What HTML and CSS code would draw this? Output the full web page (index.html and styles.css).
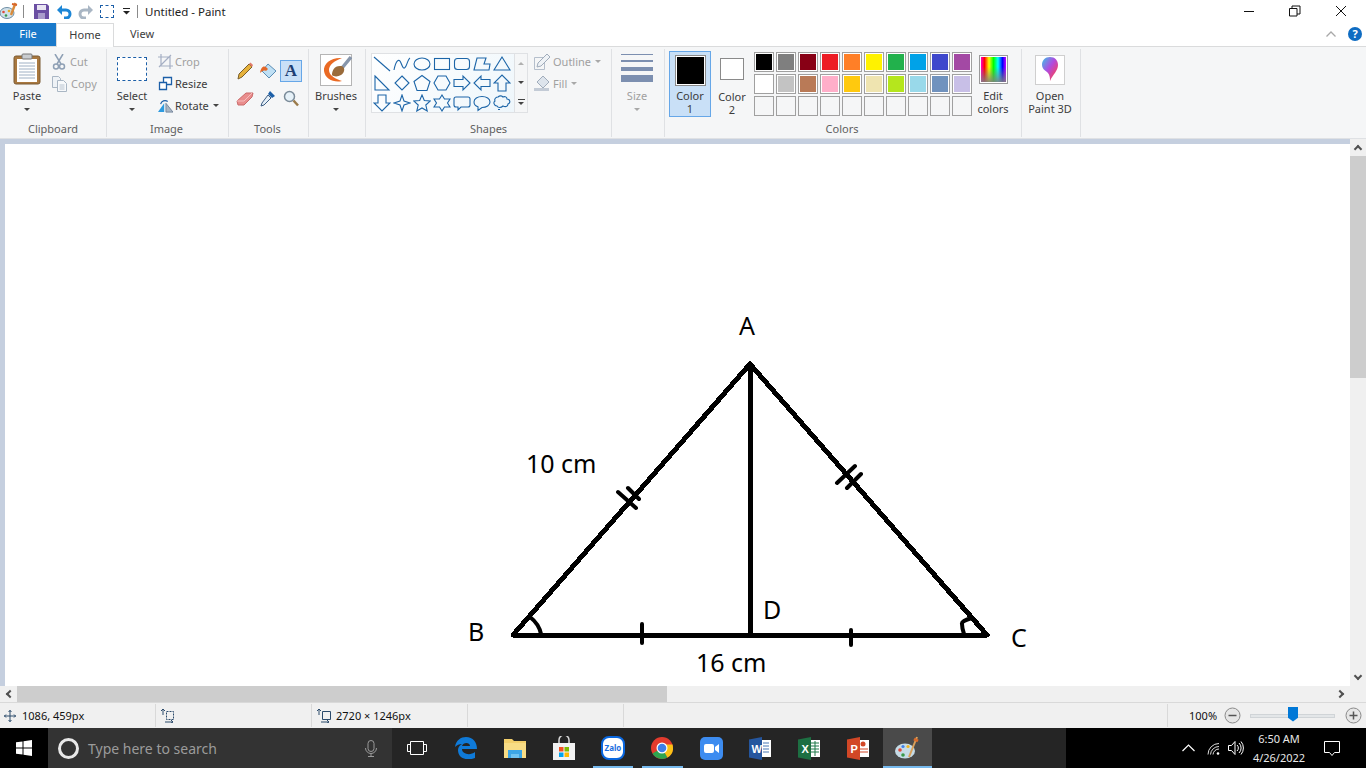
FILE: index.html
```html
<!DOCTYPE html>
<html lang="en">
<head>
<meta charset="utf-8">
<title>Untitled - Paint</title>
<link rel="stylesheet" href="styles.css">
</head>
<body>
<div class="app">
  <header class="titlebar">
    <div class="qat">
      <svg class="qi app-ic" width="18" height="18" viewBox="0 0 18 18"><ellipse cx="7" cy="11" rx="7" ry="5.5" fill="#cfe0ea" stroke="#6f8fa5"/><circle cx="3.5" cy="10" r="1.3" fill="#e04a3a"/><circle cx="6" cy="13.5" r="1.3" fill="#3a9a4a"/><circle cx="9" cy="9" r="1.3" fill="#e8a91f"/><path d="M15.5 1 L11 13" stroke="#d98a3a" stroke-width="2.4"/><path d="M12 2 l5 1" stroke="#d9662a" stroke-width="2"/></svg>
      <span class="qsep first"></span>
      <svg class="qi save" width="15" height="15" viewBox="0 0 15 15"><path d="M0 0h13l2 2v13H0z" fill="#6b4fa3"/><path d="M3 1h9v5H3z" fill="#e8e4f2"/><path d="M4 9h7v6H4z" fill="#a99ccb"/></svg>
      <svg class="qi undo" width="15" height="15" viewBox="0 0 15 15"><path d="M3 6h6a3.6 3.6 0 0 1 0 8H7" fill="none" stroke="#1c86d6" stroke-width="3"/><path d="M0 6l5-5v10z" fill="#1c86d6"/></svg>
      <svg class="qi redo" width="15" height="15" viewBox="0 0 15 15"><path d="M12 6H6a3.6 3.6 0 0 0 0 8h2" fill="none" stroke="#a9b6c4" stroke-width="3"/><path d="M15 6l-5-5v10z" fill="#a9b6c4"/></svg>
      <span class="qselect"></span>
      <svg class="qi qdrop" width="9" height="9" viewBox="0 0 9 9"><path d="M1 1h7v1H1z" fill="#222"/><path d="M1 4h7L4.500 7.500z" fill="#222"/></svg>
      <span class="qsep last"></span>
      <span class="title">Untitled - Paint</span>
    </div>
    <div class="winctl">
      <svg width="12" height="12" viewBox="0 0 12 12"><path d="M1 6.500h10" stroke="#111"/></svg>
      <svg width="12" height="12" viewBox="0 0 12 12"><path d="M.5 3.500h7.500v7.500H.5zM3 3.500V1h8v8H8" fill="none" stroke="#111"/></svg>
      <svg width="12" height="12" viewBox="0 0 12 12"><path d="M1 1l10 10M11 1L1 11" stroke="#111"/></svg>
    </div>
  </header>

  <nav class="tabs">
    <span class="tab file">File</span>
    <span class="tab home">Home</span>
    <span class="tab view">View</span>
    <span class="tabs-right">
      <svg width="10" height="6" viewBox="0 0 10 6"><path d="M.5 5.500L5 1l4.500 4.500" fill="none" stroke="#a8a8a8" stroke-width="1.300"/></svg>
      <span class="help">?</span>
    </span>
  </nav>

  <section class="ribbon">
    <div class="group g-clip">
      <div class="gbody">
        <div class="large paste">
          <svg width="28" height="32" viewBox="0 0 28 32"><rect x="1" y="3" width="26" height="28" rx="2" fill="#a9783f" stroke="#7a5a34"/><rect x="4" y="6" width="20" height="23" fill="#fff"/><path d="M6 10h16M6 13h16M6 16h16M6 19h16M6 22h16M6 25h16" stroke="#9fb0c4"/><rect x="9" y="1" width="10" height="5" rx="1" fill="#c9ccd0" stroke="#777"/></svg>
          <span class="lbl">Paste</span><i class="caret"></i>
        </div>
        <div class="smalls">
          <div class="small off"><svg width="14" height="16" viewBox="0 0 14 16"><path d="M3 0l6 10M11 0L5 10" stroke="#8fa0b5" stroke-width="1.500"/><circle cx="4" cy="12.500" r="2.500" fill="none" stroke="#8fa0b5" stroke-width="1.500"/><circle cx="10" cy="12.500" r="2.500" fill="none" stroke="#8fa0b5" stroke-width="1.500"/></svg><span>Cut</span></div>
          <div class="small off"><svg width="15" height="16" viewBox="0 0 15 16"><path d="M.5.500h6l2 2v9h-8z" fill="#eef2f6" stroke="#a9b6c4"/><path d="M5.500 4.500h6l3 3v8h-9z" fill="#f7f9fb" stroke="#a9b6c4"/><path d="M7.500 9h5M7.500 11h5M7.500 13h5" stroke="#b9c4d0"/></svg><span>Copy</span></div>
        </div>
      </div>
      <div class="glabel">Clipboard</div>
    </div>

    <div class="group g-image">
      <div class="gbody">
        <div class="large select">
          <span class="dash"></span>
          <span class="lbl">Select</span><i class="caret"></i>
        </div>
        <div class="smalls">
          <div class="small off"><svg width="15" height="15" viewBox="0 0 15 15"><path d="M3 0v12h12M0 3h12v12M13 1L1 13" fill="none" stroke="#a5afc4" stroke-width="1.200"/></svg><span>Crop</span></div>
          <div class="small"><svg width="15" height="15" viewBox="0 0 15 15"><path d="M5.500 1.500h8v7h-8z" fill="#fff" stroke="#1c5fa8" stroke-width="1.300"/><path d="M1.500 6.500h7v7h-7z" fill="#fff" stroke="#1c5fa8" stroke-width="1.300"/></svg><span>Resize</span></div>
          <div class="small"><svg width="15" height="15" viewBox="0 0 17 15"><path d="M0 15L7 5v10z" fill="#2e9be0"/><path d="M9 5l8 10H9z" fill="#a9b6c4" stroke="#71829a"/><path d="M3 6a5 5 0 0 1 8-3" fill="none" stroke="#1c5fa8" stroke-width="1.300"/></svg><span>Rotate</span><i class="caret dark"></i></div>
        </div>
      </div>
      <div class="glabel">Image</div>
    </div>

    <div class="group g-tools">
      <div class="gbody">
        <div class="toolgrid">
          <span class="tool"><svg width="16" height="18" viewBox="0 0 16 18"><path d="M12 2l3 3L5 15l-4 2 1-5z" fill="#e6b23c" stroke="#7a5f2c"/><path d="M12 2l1.500-1.500 2.500 2.500L15 5z" fill="#e27b6a"/></svg></span>
          <span class="tool"><svg width="18" height="18" viewBox="0 0 18 18"><path d="M9 2l8 7-7 7-7-7z" fill="#bfe0f5" stroke="#5a8db5"/><path d="M9 7C5 2 2 5 1 11c2-2 4-3 6-2z" fill="#e2672a"/></svg></span>
          <span class="tool on"><span class="tool-a">A</span></span>
          <span class="tool"><svg width="18" height="14" viewBox="0 0 18 14"><path d="M1 9l9-8h7l-1 4-8 8H2z" fill="#e98d8d" stroke="#c96a6a"/><path d="M1 9h7l8-8" fill="none" stroke="#f6bcbc"/></svg></span>
          <span class="tool"><svg width="16" height="17" viewBox="0 0 16 17"><path d="M10 1l5 5-3 2-4-4z" fill="#1c5fa8"/><path d="M8 5l3 3-7 7-3 1 1-3z" fill="#e4eef7" stroke="#3d5f85"/></svg></span>
          <span class="tool"><svg width="16" height="17" viewBox="0 0 16 17"><circle cx="6.500" cy="6.500" r="5" fill="#e6f1f8" stroke="#7a8b99" stroke-width="1.500"/><path d="M10.500 10.500L15 15.500" stroke="#9a7a4a" stroke-width="2.500"/></svg></span>
        </div>
      </div>
      <div class="glabel">Tools</div>
    </div>

    <div class="group g-brush">
      <div class="gbody">
        <div class="large brushes">
          <svg width="32" height="32" viewBox="0 0 32 32"><rect x=".5" y=".5" width="31" height="31" fill="#fff" stroke="#b5b5b5"/><path d="M22 4C12 3 3 9 4 17c1 8 10 12 18 10-6-2-13-5-13-11 0-5 5-9 13-12z" fill="#ea6a24"/><path d="M31 3L22 14" stroke="#8796ab" stroke-width="3.500"/><path d="M20 12c-6 0-8 5-8 9 3 3 11 1 12-4 1-3-1-5-4-5z" fill="#9a6b3a"/></svg>
          <span class="lbl">Brushes</span><i class="caret"></i>
        </div>
      </div>
      <div class="glabel">&nbsp;</div>
    </div>

    <div class="group g-shapes">
      <div class="gbody">
        <div class="gallery">
          <div class="gal-grid">
            <svg viewBox="0 0 18 18"><path d="M1 2l16 14"/></svg>
            <svg viewBox="0 0 18 18"><path d="M1 15C3 5 6 3 8 8s3 7 5 3 2-7 4-8"/></svg>
            <svg viewBox="0 0 18 18"><ellipse cx="9" cy="9" rx="8" ry="6"/></svg>
            <svg viewBox="0 0 18 18"><rect x="1.500" y="3.500" width="15" height="11"/></svg>
            <svg viewBox="0 0 18 18"><rect x="1.500" y="3.500" width="15" height="11" rx="3"/></svg>
            <svg viewBox="0 0 18 18"><path d="M1 15L4 3h9l-2 6h6l-1 6z"/></svg>
            <svg viewBox="0 0 18 18"><path d="M9 2l8 13H1z"/></svg>
            <svg viewBox="0 0 18 18"><path d="M2 2l14 14H2z"/></svg>
            <svg viewBox="0 0 18 18"><path d="M9 2l7 7-7 7-7-7z"/></svg>
            <svg viewBox="0 0 18 18"><path d="M9 1.500l8 6-3 9H4l-3-9z"/></svg>
            <svg viewBox="0 0 18 18"><path d="M5 2h8l4 7-4 7H5L1 9z"/></svg>
            <svg viewBox="0 0 18 18"><path d="M1 5.500h9V2l7 7-7 7v-3.500H1z"/></svg>
            <svg viewBox="0 0 18 18"><path d="M17 5.500H8V2L1 9l7 7v-3.500h9z"/></svg>
            <svg viewBox="0 0 18 18"><path d="M5 17V9H1l8-8 8 8h-4v8z"/></svg>
            <svg viewBox="0 0 18 18"><path d="M5 1v8H1l8 8 8-8h-4V1z"/></svg>
            <svg viewBox="0 0 18 18"><path d="M9 1l2 6 6 2-6 2-2 6-2-6-6-2 6-2z"/></svg>
            <svg viewBox="0 0 18 18"><path d="M9 1l2.300 5.500 6 .5-4.500 4 1.400 6L9 14l-5.200 3 1.400-6L.7 7l6-.5z"/></svg>
            <svg viewBox="0 0 18 18"><path d="M9 1l2.500 4H17l-2.500 4 2.500 4h-5.500L9 17l-2.500-4H1l2.500-4L1 5h5.500z"/></svg>
            <svg viewBox="0 0 18 18"><path d="M3 3h12a2 2 0 0 1 2 2v6a2 2 0 0 1-2 2H8l-3 3v-3H3a2 2 0 0 1-2-2V5a2 2 0 0 1 2-2z"/></svg>
            <svg viewBox="0 0 18 18"><path d="M9 2.500c4.500 0 8 2.300 8 5.500s-3.500 5.500-8 5.500L5 16.500v-3.700C2.500 12 1 10 1 8c0-3.200 3.500-5.500 8-5.500z"/></svg>
            <svg viewBox="0 0 18 18"><path d="M5 3c2-2 4-1 5 0 2-1 4 0 4 2 3 0 4 4 1 5 0 3-3 3-5 2-2 2-5 2-6 0-3 0-4-4-2-5-1-2 1-4 3-4zM5 15.500h2"/></svg>
          </div>
          <div class="gal-scroll">
            <span><i class="arrow up"></i></span>
            <span><i class="arrow"></i></span>
            <span><i class="more"></i><i class="arrow"></i></span>
          </div>
        </div>
        <div class="smalls outline">
          <div class="small off"><svg width="17" height="17" viewBox="0 0 17 17"><path d="M.5 4.500h10v12H.5z" fill="none" stroke="#b5bfcc"/><path d="M13 1l3 3-9 9-4 1 1-4z" fill="#eef2f6" stroke="#a0acbb"/></svg><span>Outline</span><i class="caret gray"></i></div>
          <div class="small off"><svg width="17" height="17" viewBox="0 0 17 17"><path d="M9 1l6 6-6 6-6-6z" fill="#dde4ec" stroke="#a0acbb"/><path d="M0 13h15v3H0z" fill="#c3cbd6"/></svg><span>Fill</span><i class="caret gray"></i></div>
        </div>
      </div>
      <div class="glabel">Shapes</div>
    </div>

    <div class="group g-size">
      <div class="gbody">
        <div class="large size">
          <div class="stripes"><i></i><i></i><i></i><i></i></div>
          <span class="lbl">Size</span><i class="caret gray"></i>
        </div>
      </div>
      <div class="glabel">&nbsp;</div>
    </div>

    <div class="group g-colors">
      <div class="gbody">
        <div class="colorbtn on">
          <span class="cbox black"></span>
          <span class="lbl">Color<br>1</span>
        </div>
        <div class="colorbtn two">
          <span class="cbox white"></span>
          <span class="lbl">Color<br>2</span>
        </div>
        <div class="palette">
          <i></i><i></i><i></i><i></i><i></i><i></i><i></i><i></i><i></i><i></i>
          <i></i><i></i><i></i><i></i><i></i><i></i><i></i><i></i><i></i><i></i>
          <i></i><i></i><i></i><i></i><i></i><i></i><i></i><i></i><i></i><i></i>
        </div>
        <div class="large edit">
          <span class="rainbow"></span>
          <span class="lbl">Edit<br>colors</span>
        </div>
      </div>
      <div class="glabel">Colors</div>
    </div>

    <div class="group g-p3d">
      <div class="gbody">
        <div class="large p3d">
          <span class="p3dbox"><svg width="18" height="28" viewBox="0 0 18 28"><defs><linearGradient id="p3" x1="0" y1="0" x2="1" y2="1"><stop offset="0" stop-color="#37c6e8"/><stop offset=".45" stop-color="#b04be0"/><stop offset=".8" stop-color="#f0426a"/><stop offset="1" stop-color="#f7b21f"/></linearGradient></defs><path d="M9 1c5 0 8 3.500 8 8 0 6-5 9-8 16 0-1 .5-6-3-9C3 14 1 12 1 9c0-4.500 3-8 8-8z" fill="url(#p3)"/></svg></span>
          <span class="lbl">Open<br>Paint 3D</span>
        </div>
      </div>
      <div class="glabel">&nbsp;</div>
    </div>
  </section>

  <main class="work">
    <div class="work-top">
      <div class="canvas">
        <svg class="drawing" width="1345" height="542" viewBox="5 144 1345 542">
          <g class="ink">
            <path d="M513 635L750 364L987 635Z"/>
            <path d="M750 364V635"/>
            <path class="thin" d="M618 492L636 508M628 488L639 499M837 483L855 466M847 488L861 474M642 624V643M851 630V645"/>
            <path class="thin" d="M530 617Q539 624 541 634M972 618Q961 621 962 624Q962 628 964 634"/>
          </g>
          <g class="labels">
            <text x="739" y="335">A</text>
            <text x="526" y="473">10 cm</text>
            <text x="468" y="641">B</text>
            <text x="763" y="619">D</text>
            <text x="1011" y="647">C</text>
            <text x="696" y="672">16 cm</text>
          </g>
        </svg>
      </div>
      <div class="vscroll">
        <span class="sb-btn"><i class="chev up"></i></span>
        <span class="vthumb"></span>
        <span class="sb-fill"></span>
        <span class="sb-btn"><i class="chev down"></i></span>
      </div>
    </div>
    <div class="hscroll">
      <span class="sb-btn h"><i class="chev left"></i></span>
      <span class="hthumb"></span>
      <span class="sb-fill"></span>
      <span class="sb-btn h"><i class="chev right"></i></span>
      <span class="corner"></span>
    </div>
  </main>

  <footer class="status">
    <div class="st s1"><svg width="12" height="12" viewBox="0 0 12 12"><path d="M6 0v12M0 6h12M4.500 2L6 .5 7.500 2M4.500 10L6 11.500 7.500 10M2 4.500L.5 6 2 7.500M10 4.500L11.500 6 10 7.500" fill="none" stroke="#2b4a6b"/></svg><span>1086, 459px</span></div>
    <div class="st s2"><svg width="14" height="14" viewBox="0 0 14 14"><path d="M5.500 2.500h7v8h-7z" fill="none" stroke="#2b4a6b" stroke-dasharray="2 1"/><path d="M2 0v6M0 2l2-2 2 2M4 13h8M10 11l2 2-2 1" fill="none" stroke="#2b4a6b"/></svg></div>
    <div class="st s3"><svg width="14" height="14" viewBox="0 0 14 14"><path d="M5.500 2.500h8v8h-8z" fill="none" stroke="#2b4a6b"/><path d="M2 0v6M0 2l2-2 2 2M4 13h8M10 11l2 2-2 1" fill="none" stroke="#2b4a6b"/></svg><span>2720 × 1246px</span></div>
    <div class="st s4"></div>
    <div class="st s5"></div>
    <div class="zoom">
      <span class="zpct">100%</span>
      <svg class="zbtn" width="17" height="17" viewBox="0 0 17 17"><circle cx="8.500" cy="8.500" r="7.500" fill="#e6e6e6" stroke="#8a8a8a"/><path d="M4.500 8.500h8" stroke="#555" stroke-width="1.500"/></svg>
      <div class="slider"><i class="knob"></i></div>
      <svg class="zbtn" width="17" height="17" viewBox="0 0 17 17"><circle cx="8.500" cy="8.500" r="7.500" fill="#e6e6e6" stroke="#8a8a8a"/><path d="M4.500 8.500h8M8.500 4.500v8" stroke="#555" stroke-width="1.500"/></svg>
    </div>
  </footer>

  <div class="taskbar">
    <div class="start"><svg width="16" height="16" viewBox="0 0 16 16"><path d="M0 2.300l6.500-.9v6.100H0zM7.500 1.300L16 0v7.500H7.500zM0 8.500h6.500v6.100L0 13.700zM7.500 8.500H16V16l-8.500-1.300z" fill="#fff"/></svg></div>
    <div class="search">
      <span class="cortana"></span>
      <span class="stext">Type here to search</span>
      <svg class="mic" width="12" height="17" viewBox="0 0 12 17"><rect x="3" y=".5" width="6" height="11" rx="3" fill="none" stroke="#9a9a9a"/><path d="M.5 8a5.500 5.500 0 0 0 11 0M6 13.500v3M3 16.500h6" fill="none" stroke="#9a9a9a"/></svg>
    </div>
    <div class="apps">
      <span class="app-i"><svg width="20" height="14" viewBox="0 0 20 14"><path d="M3.500.5h13v13h-13zM.5 3.500h3v7h-3zM16.500 3.500h3v7h-3z" fill="none" stroke="#fff"/></svg></span>
      <span class="app-i"><svg width="22" height="22" viewBox="0 0 22 22"><path d="M0 10C1 3 6 0 11 0c7 0 11 5 11 12H7c0 5 8 7 13 3v6c-7 3-17 1-17-8 0-3 2-5 4-6-3 0-5 1-7 3zM7 9h8c0-4-7-4-8 0z" fill="#0f7ad8"/></svg></span>
      <span class="app-i"><svg width="22" height="20" viewBox="0 0 22 20"><path d="M0 1h8l2 2h12v17H0z" fill="#f3cf6b"/><path d="M0 5h22v15H0z" fill="#f8dc85"/><path d="M4 12h14v8h-3v-4H7v4H4z" fill="#3ca6e6"/><path d="M7 16h8v4H7z" fill="#6fc3f0"/></svg></span>
      <span class="app-i"><svg width="24" height="24" viewBox="0 0 24 24"><path d="M7 7V4a5 5 0 0 1 10 0v3" fill="none" stroke="#d8d8d8" stroke-width="1.500"/><path d="M1 7h22v17H1z" fill="#f2f2f2"/><path d="M7 11h4.500v4.500H7z" fill="#f25022"/><path d="M12.500 11H17v4.500h-4.500z" fill="#7fba00"/><path d="M7 16.500h4.500V21H7z" fill="#00a4ef"/><path d="M12.500 16.500H17V21h-4.500z" fill="#ffb900"/></svg></span>
      <span class="app-i under"><span class="zalo"><span class="zalo-t">Zalo</span></span></span>
      <span class="app-i under"><svg width="22" height="22" viewBox="0 0 22 22"><circle cx="11" cy="11" r="11" fill="#e33b2e"/><path d="M11 11L1.500 16.500A11 11 0 0 0 16.500 20.500z" fill="#2ea44f"/><path d="M11 11l5.500 9.500A11 11 0 0 0 21.800 9 L21.500 7.500H11z" fill="#fbc116"/><circle cx="11" cy="11" r="5.500" fill="#fff"/><circle cx="11" cy="11" r="4.300" fill="#3f7fe8"/></svg></span>
      <span class="app-i"><svg width="23" height="23" viewBox="0 0 23 23"><rect width="23" height="23" rx="5" fill="#3d8cf0"/><rect x="4" y="7" width="10" height="9" rx="2" fill="#fff"/><path d="M15 10l4-3v9l-4-3z" fill="#fff"/></svg></span>
      <span class="app-i"><svg width="23" height="23" viewBox="0 0 23 23"><path d="M11 3h11v17H11z" fill="#fff"/><path d="M14 6h6M14 9h6M14 12h6M14 15h6" stroke="#4a78b5"/><path d="M0 2.500L13 0v23L0 20.500z" fill="#25569e"/><text class="ofc" x="2.500" y="15.500">W</text></svg></span>
      <span class="app-i"><svg width="23" height="23" viewBox="0 0 23 23"><path d="M11 3h11v17H11z" fill="#fff"/><path d="M13 6h8M13 9h8M13 12h8M13 15h8M17 4v15" stroke="#1f7a4a"/><path d="M0 2.500L13 0v23L0 20.500z" fill="#1d6f42"/><text class="ofc" x="3.500" y="15.500">X</text></svg></span>
      <span class="app-i"><svg width="23" height="23" viewBox="0 0 23 23"><path d="M11 3h11v17H11z" fill="#fff"/><circle cx="16" cy="7" r="2.500" fill="#d24726"/><path d="M13 12h8M13 15h8" stroke="#d24726"/><path d="M0 2.500L13 0v23L0 20.500z" fill="#d24726"/><text class="ofc" x="3.500" y="15.500">P</text></svg></span>
      <span class="app-i active"><svg width="24" height="24" viewBox="0 0 24 24"><ellipse cx="10" cy="15" rx="10" ry="7.500" fill="#c5dbe6"/><circle cx="5" cy="14" r="1.800" fill="#e0483a"/><circle cx="8" cy="19" r="1.800" fill="#3a9a4a"/><circle cx="8" cy="10.500" r="1.600" fill="#3f7fe8"/><circle cx="13" cy="10.500" r="1.600" fill="#eeb422"/><path d="M22 1L14 21" stroke="#d9a05a" stroke-width="2"/><path d="M19 3l4 2" stroke="#d96a2a" stroke-width="3"/></svg></span>
    </div>
    <div class="taskfill"></div>
    <div class="tray">
      <svg class="t-chev" width="13" height="8" viewBox="0 0 13 8"><path d="M.5 7L6.500 1l6 6" fill="none" stroke="#fff" stroke-width="1.200"/></svg>
      <svg class="t-wifi" width="13" height="13" viewBox="0 0 13 13"><path d="M1 12.500A11 11 0 0 1 12 1.500M3.500 12.500A8.500 8.500 0 0 1 12 4.500M6 12.500A6 6 0 0 1 12 7" fill="none" stroke="#e0e0e0"/><circle cx="11" cy="11.500" r="1.300" fill="#fff"/></svg>
      <svg class="t-vol" width="16" height="14" viewBox="0 0 16 14"><path d="M.5 4.500h3l3.500-4v13l-3.500-4h-3z" fill="none" stroke="#fff"/><path d="M9 4a4 4 0 0 1 0 6M11 2a7 7 0 0 1 0 10M13 .5a10 10 0 0 1 0 13" fill="none" stroke="#fff"/></svg>
      <div class="clock"><span>6:50 AM</span><span>4/26/2022</span></div>
      <svg class="t-note" width="16" height="15" viewBox="0 0 16 15"><path d="M.5.500h15v11h-5l-2.500 3-2.500-3h-5z" fill="none" stroke="#fff"/></svg>
    </div>
  </div>
</div>
</body>
</html>
```

FILE: styles.css
```css
* { box-sizing: border-box; }
html, body { margin: 0; padding: 0; }
body {
  width: 1366px; height: 768px; overflow: hidden; background: #fff;
  font-family: "Noto Sans", "Open Sans", sans-serif; font-size: 11px; color: #3c3c3c;
}
svg { display: block; flex: none; }
.app { display: flex; flex-direction: column; height: 768px; }

/* title bar */
.titlebar { height: 23px; display: flex; justify-content: space-between; align-items: center; background: #fff; }
.qat { display: flex; align-items: center; }
.app-ic { margin-right: 5px; }
.qsep { width: 1px; height: 13px; background: #8a8a8a; }
.save { margin-left: 10px; }
.undo { margin-left: 8px; }
.redo { margin-left: 6px; }
.qselect { width: 14px; height: 13px; margin-left: 7px; border: 1px dashed #1c5fa8; }
.qdrop { margin-left: 8px; }
.qsep.last { margin-left: 6px; }
.title { margin-left: 7px; font-size: 11.500px; color: #222; }
.winctl { display: flex; gap: 34px; padding-right: 19px; }

/* tabs */
.tabs { height: 24px; display: flex; align-items: stretch; border-bottom: 1px solid #dadbdc; font-size: 11px; background: #fff; }
.tab { display: flex; align-items: center; justify-content: center; padding-bottom: 2px; }
.tab.file { width: 56px; background: #1979ca; color: #fff; }
.tab.home { width: 58px; margin-bottom: -1px; border: 1px solid #dadbdc; border-bottom: 0; background: #fff; }
.tab.view { width: 56px; }
.tabs-right { margin-left: auto; display: flex; align-items: center; gap: 12px; padding-right: 4px; }
.help { width: 14px; height: 14px; border-radius: 50%; background: #0f6cc2; color: #fff; font-weight: 700; font-size: 11px; line-height: 14px; text-align: center; }

/* ribbon */
.ribbon { height: 92px; display: flex; background: #f5f6f7; border-bottom: 1px solid #dfe1e4; padding-top: 2px; }
.group { display: flex; flex-direction: column; height: 88px; border-right: 1px solid #dfe1e4; flex: none; }
.gbody { flex: 1; display: flex; min-height: 0; }
.glabel { height: 17px; line-height: 18px; text-align: center; color: #5f5f5f; font-size: 11px; }
.g-image .glabel, .g-tools .glabel, .g-colors .glabel { padding-right: 2px; }
.g-clip { width: 107px; }
.g-image { width: 122px; }
.g-tools { width: 80px; }
.g-brush { width: 57px; }
.g-shapes { width: 246px; }
.g-size { width: 53px; }
.g-colors { width: 357px; }
.g-p3d { width: 59px; }

.large { display: flex; flex-direction: column; align-items: center; }
.lbl { line-height: 13px; text-align: center; display: block; }
.caret { display: block; width: 0; height: 0; border: 3px solid transparent; border-top: 3px solid #444; border-bottom: 0; }
.caret.gray { border-top-color: #a8a8a8; }
.large .caret { margin-top: 6px; }
.small .caret { margin-left: 4px; }
.smalls { display: flex; flex-direction: column; padding-top: 2px; }
.small { height: 22px; display: flex; align-items: center; }
.small svg { margin-right: 4px; }
.small.off { color: #a0a0a0; }

.paste { width: 38px; margin-left: 8px; padding-top: 4px; }
.paste .lbl { margin-top: 4px; }
.g-clip .smalls { margin-left: 6px; padding-top: 2px; }
.g-clip .small svg { margin-right: 4px; }
.select { width: 40px; margin-left: 5px; padding-top: 8px; }
.dash { display: block; width: 30px; height: 24px; border: 1px dashed #1c5fa8; background: #fff; }
.select .lbl { margin-top: 8px; }
.g-image .smalls { margin-left: 6px; }
.g-image .small svg { margin-right: 2px; }

.toolgrid { display: grid; grid-template-columns: repeat(3, 23px); grid-auto-rows: 28px; margin: 8px 0 0 5px; }
.tool { display: flex; align-items: center; justify-content: center; width: 22px; height: 22px; margin-top: 3px; }
.tool.on { background: #c9e0f7; border: 1px solid #66a7e8; }
.tool-a { font-family: "Liberation Serif", serif; font-weight: 700; font-size: 17px; color: #1f3f74; line-height: 1; }

.brushes { width: 54px; padding-top: 5px; }
.brushes .lbl { margin-top: 3px; }

.gallery { display: flex; width: 157px; height: 60px; margin: 4px 0 0 5px; border: 1px solid #dfe1e4; background: #fff; }
.gal-grid { width: 142px; display: grid; grid-template-columns: repeat(7, 20px); grid-auto-rows: 19.500px; justify-content: start; background: linear-gradient(135deg, #fff, #eef6fb); }
.gal-grid svg { width: 18px; height: 18px; margin: 1px; fill: none; stroke: #1c65a8; stroke-width: 1.100; }
.gal-scroll { flex: 1; display: flex; flex-direction: column; border-left: 1px solid #dfe1e4; background: #f5f6f7; }
.gal-scroll span { flex: 1; display: flex; flex-direction: column; align-items: center; justify-content: center; gap: 2px; }
.arrow { display: block; width: 0; height: 0; border: 3px solid transparent; border-top: 3px solid #444; border-bottom: 0; }
.arrow.up { border-top: 0; border-bottom: 3px solid #b0b0b0; }
.more { display: block; width: 7px; height: 1px; background: #444; }
.outline { margin-left: 6px; padding-top: 2px; }
.outline .small svg { margin-right: 2px; }

.size { width: 50px; padding-top: 5px; }
.stripes { width: 32px; display: flex; flex-direction: column; }
.stripes i { display: block; background: #7c8fb0; }
.stripes i:nth-child(1) { height: 1px; }
.stripes i:nth-child(2) { height: 2px; margin-top: 5px; }
.stripes i:nth-child(3) { height: 4px; margin-top: 5px; }
.stripes i:nth-child(4) { height: 7px; margin-top: 4px; }
.size .lbl { margin-top: 7px; color: #a0a0a0; }

.colorbtn { width: 42px; height: 66px; margin-top: 2px; display: flex; flex-direction: column; align-items: center; border: 1px solid transparent; }
.colorbtn.on { margin-left: 4px; background: #c9e0f7; border-color: #66a7e8; }
.colorbtn.two { margin-left: 0; }
.cbox { display: block; }
.cbox.black { width: 31px; height: 31px; margin-top: 3px; background: #000; border: 1px solid #8a8a8a; outline: 1px solid #fff; outline-offset: -2px; }
.cbox.white { width: 24px; height: 24px; margin-top: 6px; margin-bottom: 7px; background: #fff; border: 1px solid #8a8a8a; }
.colorbtn .lbl { margin-top: 3px; }
.palette { display: grid; grid-template-columns: repeat(10, 20px); grid-auto-rows: 20px; gap: 2px; margin: 3px 0 0 1px; height: 64px; }
.palette i { display: block; border: 1px solid #a0a0a0; box-shadow: inset 0 0 0 1px #fff; }
.palette i:nth-child(1) { background: #000; }
.palette i:nth-child(2) { background: #7f7f7f; }
.palette i:nth-child(3) { background: #880015; }
.palette i:nth-child(4) { background: #ed1c24; }
.palette i:nth-child(5) { background: #ff7f27; }
.palette i:nth-child(6) { background: #fff200; }
.palette i:nth-child(7) { background: #22b14c; }
.palette i:nth-child(8) { background: #00a2e8; }
.palette i:nth-child(9) { background: #3f48cc; }
.palette i:nth-child(10) { background: #a349a4; }
.palette i:nth-child(11) { background: #fff; }
.palette i:nth-child(12) { background: #c3c3c3; }
.palette i:nth-child(13) { background: #b97a57; }
.palette i:nth-child(14) { background: #ffaec9; }
.palette i:nth-child(15) { background: #ffc90e; }
.palette i:nth-child(16) { background: #efe4b0; }
.palette i:nth-child(17) { background: #b5e61d; }
.palette i:nth-child(18) { background: #99d9ea; }
.palette i:nth-child(19) { background: #7092be; }
.palette i:nth-child(20) { background: #c8bfe7; }
.palette i:nth-child(n+21) { background: #f5f6f7; box-shadow: none; }
.edit { width: 40px; margin-left: 1px; padding-top: 6px; }
.rainbow { display: block; width: 29px; height: 29px; border: 1px solid #9a9a9a; box-shadow: inset 0 0 0 1px #fff; background: linear-gradient(to bottom, rgba(255,255,255,0) 40%, rgba(128,128,128,.95) 100%), linear-gradient(to right, #f0f, #f00, #ff0, #0f0, #0ff, #00f, #f0f); }
.edit .lbl { margin-top: 5px; }

.p3d { width: 56px; padding-top: 6px; }
.p3dbox { width: 30px; height: 30px; display: flex; align-items: center; justify-content: center; background: #fff; border: 1px solid #cfcfcf; }
.p3d .lbl { margin-top: 4px; white-space: nowrap; }

/* workspace */
.work { height: 564px; display: flex; flex-direction: column; background: #c5cfdf; }
.work-top { flex: 1; min-height: 0; display: flex; }
.canvas { width: 1345px; margin: 5px 0 0 5px; background: #fff; }
.drawing { overflow: hidden; }
.ink path { fill: none; stroke: #000; stroke-width: 5; stroke-linejoin: round; stroke-linecap: round; shape-rendering: crispEdges; }
.ink path.thin { stroke-width: 4; shape-rendering: auto; }
.labels text { font-family: "Noto Sans", "Open Sans", sans-serif; font-size: 25px; fill: #000; }

.vscroll { width: 16px; display: flex; flex-direction: column; background: #f0f0f0; }
.vthumb { height: 222px; background: #cdcdcd; }
.sb-fill { flex: 1; }
.sb-btn { height: 17px; display: flex; align-items: center; justify-content: center; background: #f0f0f0; }
.sb-btn.h { width: 17px; height: 16px; }
.chev { display: block; width: 6px; height: 6px; border: solid #505050; border-width: 2px 0 0 2px; }
.chev.up { transform: rotate(45deg); margin-top: 3px; }
.chev.down { transform: rotate(225deg); margin-bottom: 3px; }
.chev.left { transform: rotate(-45deg); margin-left: 3px; }
.chev.right { transform: rotate(135deg); margin-right: 3px; }
.hscroll { height: 16px; display: flex; background: #f0f0f0; }
.hthumb { width: 650px; background: #cdcdcd; }
.corner { width: 16px; background: #f0f0f0; }

/* status bar */
.status { height: 26px; display: flex; align-items: stretch; background: #f0f0f0; border-top: 1px solid #d9d9d9; color: #111; font-size: 11px; }
.st { display: flex; align-items: center; border-right: 1px solid #d9d9d9; margin: 1px 0; }
.st span { white-space: nowrap; }
.s1 { width: 156px; padding-left: 4px; gap: 6px; }
.s2 { width: 156px; padding-left: 5px; }
.s3 { width: 156px; padding-left: 5px; gap: 5px; }
.s4 { width: 156px; }
.s5 { width: 544px; }
.zoom { flex: 1; display: flex; align-items: center; padding-left: 21px; }
.zpct { width: 35px; }
.slider { position: relative; width: 85px; height: 4px; margin: 0 10px 0 9px; background: #e3e6e8; border: 1px solid #d0d4d7; }
.knob { position: absolute; left: 37px; top: -8px; width: 10px; height: 15px; background: #0078d7; clip-path: polygon(0 0, 100% 0, 100% 75%, 50% 100%, 0 75%); }

/* taskbar */
.taskbar { height: 40px; display: flex; background: #252525; color: #fff; }
.start { width: 48px; display: flex; align-items: center; justify-content: center; background: #000; }
.search { width: 344px; display: flex; align-items: center; padding-left: 10px; background: #333; }
.cortana { width: 21px; height: 21px; border: 3px solid #e8e8e8; border-radius: 50%; flex: none; }
.stext { margin-left: 9px; font-size: 14px; color: #9b9b9b; }
.mic { margin-left: auto; margin-right: 15px; }
.apps { width: 540px; display: flex; }
.app-i { flex: 1; display: flex; align-items: center; justify-content: center; position: relative; }
.app-i.under::after { content: ""; position: absolute; left: 5px; right: 4px; bottom: 0; height: 2px; background: #76b9ed; }
.app-i.active { background: #4a4a4a; }
.app-i.active::after { content: ""; position: absolute; left: 0; right: 0; bottom: 0; height: 2px; background: #76b9ed; }
.zalo { width: 24px; height: 24px; border-radius: 8px; background: #fff; border: 2px solid #0a68e0; display: flex; align-items: center; justify-content: center; }
.zalo-t { font-size: 8px; font-weight: 700; color: #1a6fe0; line-height: 1; }
.ofc { font-family: "Liberation Sans", sans-serif; font-size: 11px; font-weight: 700; fill: #fff; }
.taskfill { width: 134px; }
.tray { flex: 1; background: #000; display: flex; align-items: center; padding-left: 116px; }
.t-chev { margin-right: 12px; }
.t-wifi { margin-right: 8px; }
.t-vol { margin-right: 5px; }
.clock { width: 60px; display: flex; flex-direction: column; align-items: center; font-size: 11px; line-height: 19px; color: #e8e8e8; margin-right: 15px; }
```
